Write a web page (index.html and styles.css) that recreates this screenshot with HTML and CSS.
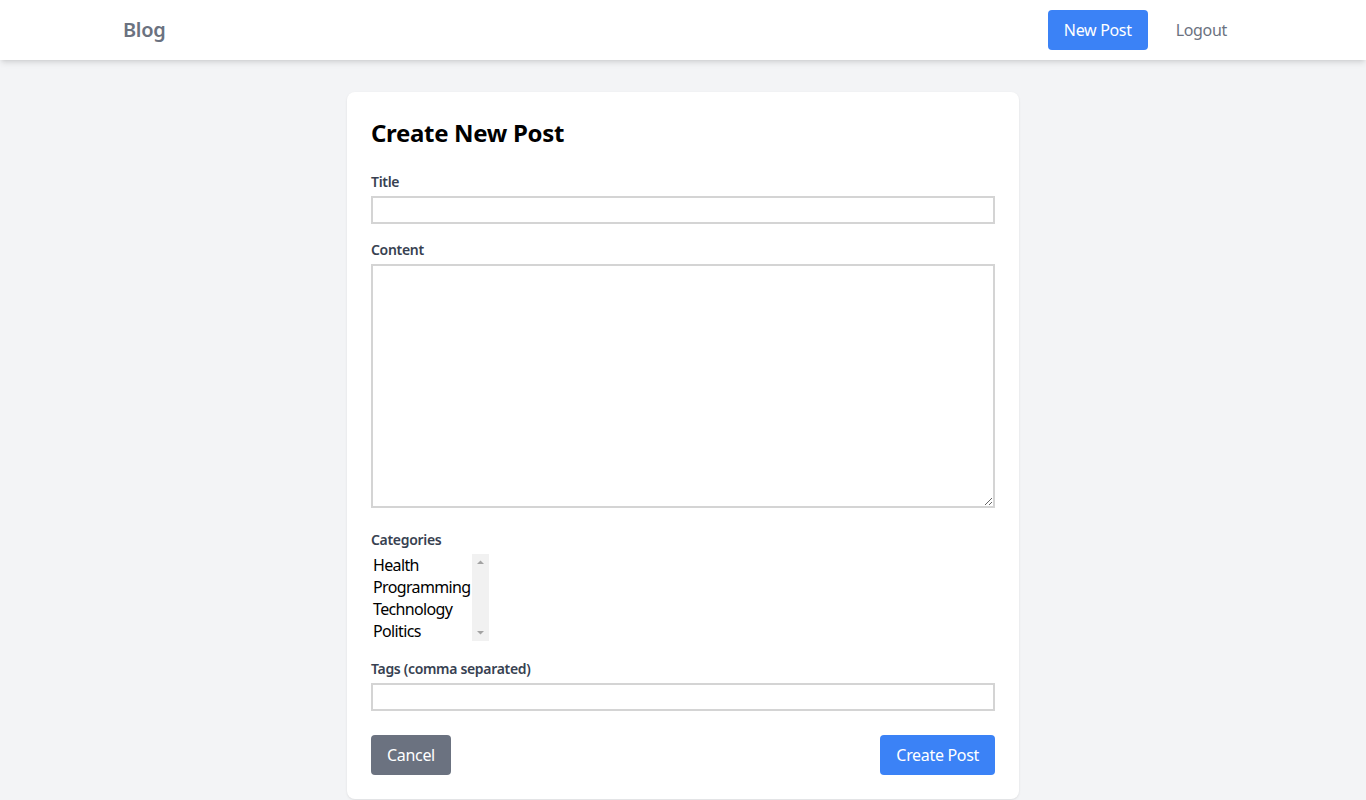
FILE: index.html
```html
<!DOCTYPE html>
<html lang="en">
<head>
<meta charset="utf-8">
<title>Create New Post</title>
<link rel="stylesheet" href="styles.css">
</head>
<body>
<nav class="nav">
  <div class="nav-inner">
    <a class="brand" href="#">Blog</a>
    <div class="nav-actions">
      <a class="btn btn-blue" href="#">New Post</a>
      <a class="nav-link" href="#">Logout</a>
    </div>
  </div>
</nav>
<main class="main">
  <form class="card">
    <h1 class="card-title">Create New Post</h1>
    <div class="field">
      <label class="label" for="title">Title</label>
      <input class="input" id="title" type="text">
    </div>
    <div class="field field-content">
      <label class="label" for="content">Content</label>
      <textarea class="input textarea" id="content" rows="10"></textarea>
    </div>
    <div class="field field-cats">
      <label class="label" for="cats">Categories</label>
      <div class="listbox">
        <select class="select" id="cats" multiple size="4">
          <option>Health</option>
          <option>Programming</option>
          <option>Technology</option>
          <option>Politics</option>
          <option>Science</option>
        </select>
        <div class="scrollbar" aria-hidden="true">
          <svg width="17" height="17" viewBox="0 0 17 17"><path d="M5 10 L8.5 6.5 L12 10 Z" fill="#a3a3a3"/></svg>
          <svg width="17" height="17" viewBox="0 0 17 17"><path d="M5 7 L8.5 10.5 L12 7 Z" fill="#a3a3a3"/></svg>
        </div>
      </div>
    </div>
    <div class="field field-tags">
      <label class="label" for="tags">Tags (comma separated)</label>
      <input class="input" id="tags" type="text">
    </div>
    <div class="actions">
      <a class="btn btn-gray" href="#">Cancel</a>
      <button class="btn btn-blue" type="submit">Create Post</button>
    </div>
  </form>
</main>
</body>
</html>
```
FILE: styles.css
```css
* { box-sizing: border-box; }
html, body { margin: 0; padding: 0; }
body {
  background: #f3f4f6;
  font-family: "Noto Sans", "Open Sans", "DejaVu Sans", sans-serif;
  font-size: 16px;
  line-height: 1.5;
  letter-spacing: -0.02em;
  color: #111827;
  min-height: 800px;
}
a { text-decoration: none; color: inherit; }

.nav {
  background: #fff;
  box-shadow: 0 4px 6px -1px rgba(0,0,0,0.1), 0 2px 4px -2px rgba(0,0,0,0.1);
  position: relative;
  z-index: 1;
}
.nav-inner {
  max-width: 1152px;
  margin: 0 auto;
  padding: 0 16px;
  height: 60px;
  display: flex;
  align-items: center;
  justify-content: space-between;
}
.brand {
  font-size: 20px;
  font-weight: 600;
  color: #6b7280;
  line-height: 28px;
}
.nav-actions {
  display: flex;
  align-items: center;
  gap: 12px;
}
.nav-link {
  color: #6b7280;
  padding: 8px 16px;
  line-height: 24px;
}
.btn {
  display: inline-block;
  padding: 8px 16px;
  line-height: 24px;
  font-size: 16px;
  font-family: inherit;
  letter-spacing: inherit;
  border: 0;
  border-radius: 4px;
  color: #fff;
  cursor: pointer;
}
.btn-blue { background: #3b82f6; }
.btn-gray { background: #6b7280; }

.main {
  padding-top: 32px;
}
.card {
  width: 672px;
  margin: 0 auto;
  background: #fff;
  border-radius: 8px;
  padding: 24px;
  box-shadow: 0 1px 3px rgba(0,0,0,0.06), 0 1px 2px rgba(0,0,0,0.04);
}
.card-title {
  margin: 0 0 24px;
  padding-top: 1px;
  height: 32px;
  font-size: 24px;
  line-height: 32px;
  font-weight: 700;
  color: #000;
}
.field { margin-bottom: 16px; }
.field-content { margin-bottom: 22px; }
.field-cats { margin-bottom: 18px; }
.field-tags { margin-bottom: 24px; }
.label {
  display: block;
  font-size: 14px;
  line-height: 20px;
  font-weight: 600;
  color: #374151;
  margin-bottom: 4px;
}
.input {
  display: block;
  width: 100%;
  height: 28px;
  border: 2px solid #d4d4d4;
  border-radius: 0;
  padding: 0 2px;
  font-family: inherit;
  font-size: 16px;
  line-height: 24px;
  background: #fff;
  outline: none;
}
.textarea {
  height: 244px;
  resize: vertical;
}
.listbox {
  display: flex;
  width: 118px;
  height: 87px;
}
.select {
  display: block;
  width: 101px;
  height: 87px;
  border: 0;
  padding: 0;
  font-family: inherit;
  font-size: 16px;
  letter-spacing: -0.04em;
  color: #000;
  background: #fff;
  outline: none;
  overflow: hidden;
  scrollbar-width: none;
}
.select option {
  padding: 0 2px;
  line-height: 21px;
  min-height: 21px;
}
.scrollbar {
  width: 17px;
  height: 87px;
  background: #f1f1f1;
  display: flex;
  flex-direction: column;
  justify-content: space-between;
}
.scrollbar svg { display: block; }
.actions {
  display: flex;
  justify-content: space-between;
  align-items: center;
}
```
